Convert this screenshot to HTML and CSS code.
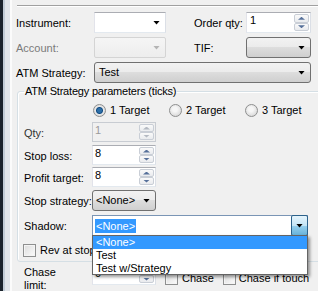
FILE: index.html
```html
<!DOCTYPE html>
<html lang="en">
<head>
    <meta charset="UTF-8">
    <title>Order entry</title>
    <link rel="stylesheet" href="styles.css">
</head>
<body>
<div class="window">
    <div class="edge"></div>
    <div class="content">
        <div class="sep"></div>

        <div class="top">
            <span class="lbl">Instrument:</span>
            <div class="combo edit"><span class="arrow"></span></div>
            <span></span>
            <span class="lbl">Order qty:</span>
            <div class="spin"><span class="val">1</span><div class="btns"><span class="b"><i class="up"></i></span><span class="b"><i class="dn"></i></span></div></div>

            <span class="lbl off">Account:</span>
            <div class="combo off"><span class="arrow"></span></div>
            <span></span>
            <span class="lbl">TIF:</span>
            <div class="combo list"><span class="arrow"></span></div>

            <span class="lbl">ATM Strategy:</span>
            <div class="combo list wide">Test<span class="arrow"></span></div>
        </div>

        <fieldset class="group">
            <legend>ATM Strategy parameters (ticks)</legend>

            <div class="radios">
                <label class="ropt"><span class="radio on"></span>1 Target</label>
                <label class="ropt"><span class="radio"></span>2 Target</label>
                <label class="ropt"><span class="radio"></span>3 Target</label>
            </div>

            <div class="prow r-qty">
                <span class="plbl">Qty:</span>
                <div class="spin small off"><span class="val">1</span><div class="btns"><span class="b"><i class="up"></i></span><span class="b"><i class="dn"></i></span></div></div>
            </div>
            <div class="prow r-stop">
                <span class="plbl">Stop loss:</span>
                <div class="spin small"><span class="val">8</span><div class="btns"><span class="b"><i class="up"></i></span><span class="b"><i class="dn"></i></span></div></div>
            </div>
            <div class="prow r-profit">
                <span class="plbl">Profit target:</span>
                <div class="spin small"><span class="val">8</span><div class="btns"><span class="b"><i class="up"></i></span><span class="b"><i class="dn"></i></span></div></div>
            </div>
            <div class="prow r-strat">
                <span class="plbl">Stop strategy:</span>
                <div class="combo list narrow">&lt;None&gt;<span class="arrow"></span></div>
            </div>
            <div class="prow r-shadow">
                <span class="plbl">Shadow:</span>
                <div class="combo shadow">
                    <span class="sel">&lt;None&gt;</span>
                    <span class="dropbtn"><span class="arrow"></span></span>
                    <ul class="droplist">
                        <li class="hi">&lt;None&gt;</li>
                        <li>Test</li>
                        <li>Test w/Strategy</li>
                    </ul>
                </div>
            </div>
            <div class="crow">
                <span class="check"></span>Rev at stop
            </div>
        </fieldset>

        <div class="chase">
            <span class="plbl two">Chase limit:</span>
            <div class="spin small"><span class="val">0</span><div class="btns"><span class="b"><i class="up"></i></span><span class="b"><i class="dn"></i></span></div></div>
            <span class="check c1"></span><span class="ct">Chase</span>
            <span class="check c2"></span><span class="ct">Chase if touch</span>
        </div>
    </div>
    <div class="rim"></div>
</div>
</body>
</html>
```

FILE: styles.css
```css
* {
    box-sizing: border-box;
}
body {
    margin: 0;
    width: 318px;
    height: 291px;
    overflow: hidden;
    background: #f0f0f0;
    font-family: "Liberation Sans", Arial, sans-serif;
    font-size: 11px;
    line-height: 13px;
    color: #000;
}
.window {
    display: flex;
    height: 291px;
}
.edge {
    width: 12px;
    flex: none;
    background: linear-gradient(to right, #1b232c 0 3px, #c2ccd6 3px 5px, #e2e6ea 5px 10px, #fbfbfb 10px 12px);
}
.rim {
    width: 2px;
    flex: none;
    background: linear-gradient(to right, #fdfdfd 0 1px, #e4e4e4 1px 2px);
}
.content {
    flex: 1;
    padding-left: 4px;
}
.sep {
    margin: 5px 2px 0 1px;
    height: 2px;
    border-top: 1px solid #a0a0a0;
    border-bottom: 1px solid #fff;
}

/* top rows */
.top {
    display: grid;
    grid-template-columns: 78px 72px 28px 52px 65px;
    grid-auto-rows: 21px;
    row-gap: 4px;
    margin-top: 5px;
    align-items: center;
}
.lbl {
    padding-top: 2px;
}
.lbl.off {
    color: #7a7a7a;
}
.wide {
    grid-column: 2 / 6;
}

/* combo boxes */
.combo {
    height: 21px;
    display: flex;
    align-items: center;
    padding-left: 4px;
    position: relative;
}
.arrow {
    width: 7px;
    height: 4px;
    margin-left: auto;
    margin-right: 5px;
    background: #000;
    clip-path: polygon(0 0, 100% 0, 50% 100%);
}
.combo.edit {
    background: #fff;
    border: 1px solid;
    border-color: #abadb3 #dbdfe6 #e3e9ef #e2e3ea;
}
.combo.off {
    background: linear-gradient(#f5f5f5, #ededed);
    border: 1px solid #d4d4d4;
    border-radius: 2px;
}
.combo.off .arrow {
    background: #b4b4b4;
}
.combo.list {
    border: 1px solid #707070;
    border-radius: 3px;
    background: linear-gradient(#f2f2f2, #ebebeb 50%, #dddddd 50%, #cfcfcf);
}
.combo.narrow {
    width: 64px;
    padding-left: 3px;
}
.combo.shadow {
    width: 216px;
    background: #fff;
    border: 1px solid #7a95b5;
    padding-left: 2px;
    z-index: 5;
}
.sel {
    background: #3399ff;
    color: #fff;
    padding: 1px 1px 0;
}
.dropbtn {
    margin: -1px -1px -1px auto;
    width: 17px;
    height: 21px;
    display: flex;
    align-items: center;
    border: 1px solid #2c628b;
    border-radius: 2px;
    background: linear-gradient(#e5f4fc, #c4e5f6 50%, #98d1ef 50%, #68b3db);
}
.dropbtn .arrow {
    margin: 0 auto;
}
.droplist {
    position: absolute;
    top: 100%;
    left: -1px;
    width: 216px;
    height: 40px;
    margin: 0;
    padding: 0;
    overflow: hidden;
    list-style: none;
    background: #fff;
    border: 1px solid #646464;
    box-shadow: 2px 2px 3px rgba(0, 0, 0, 0.4);
}
.droplist li {
    height: 13px;
    padding-left: 3px;
}
.droplist li.hi {
    background: #3399ff;
    color: #fff;
}

/* numeric spinners */
.spin {
    height: 21px;
    display: flex;
    background: #fff;
    border: 1px solid;
    border-color: #abadb3 #dbdfe6 #e3e9ef #e2e3ea;
}
.spin.small {
    width: 64px;
    height: 20px;
    flex: none;
}
.val {
    flex: 1;
    padding: 1px 0 0 3px;
}
.spin.small .val {
    padding-left: 2px;
}
.btns {
    width: 15px;
    margin: 1px 1px 1px 0;
    display: flex;
    flex-direction: column;
}
.b {
    flex: 1;
    display: flex;
    align-items: center;
    justify-content: center;
    border: 1px solid #c9ced6;
    border-radius: 2px;
    background: linear-gradient(#fafafa, #e9ebee);
}
.b i {
    width: 7px;
    height: 3px;
    background: #56709a;
}
.b .up {
    clip-path: polygon(50% 0, 100% 100%, 0 100%);
}
.b .dn {
    clip-path: polygon(0 0, 100% 0, 50% 100%);
}
.spin.off {
    background: #f0f0f0;
    border-color: #c8ccd2;
    color: #9a9a9a;
}
.spin.off .b i {
    background: #b4b9c2;
}

/* group box */
.group {
    margin: 2px 2px 0 1px;
    padding: 0 0 4px;
    min-width: 0;
    border: 1px solid #d5dfe5;
    border-radius: 3px;
    box-shadow: inset 1px 1px #fff;
}
.group legend {
    margin-left: 6px;
    padding: 0 1px;
    letter-spacing: -0.2px;
}
.radios {
    display: flex;
    margin: 6px 0 0 75px;
    height: 13px;
}
.ropt {
    display: flex;
    align-items: center;
    gap: 4px;
    width: 76px;
}
.radio {
    width: 13px;
    height: 13px;
    flex: none;
    border-radius: 50%;
    border: 1px solid #8e8f8f;
    background: radial-gradient(circle at 45% 40%, #f6f6f6 0 25%, #d2d2d2 90%);
}
.radio.on {
    background: radial-gradient(circle, #2d6fa8 0 2px, #0f4a82 3px, #e8e8e8 4px, #d2d2d2 90%);
}
.prow {
    display: flex;
    align-items: center;
    padding-left: 6px;
}
.plbl {
    width: 68px;
    flex: none;
    padding-top: 2px;
}
.r-qty {
    margin-top: 5px;
}
.r-qty .plbl {
    color: #333;
}
.r-stop {
    margin-top: 3px;
}
.r-profit {
    margin-top: 2px;
}
.r-strat {
    margin-top: 3px;
}
.r-shadow {
    margin-top: 4px;
}
.crow {
    display: flex;
    align-items: center;
    gap: 4px;
    margin-top: 8px;
    padding-left: 5px;
    height: 13px;
    white-space: nowrap;
}
.check {
    width: 13px;
    height: 13px;
    flex: none;
    border: 1px solid #8e8f8f;
    background: linear-gradient(135deg, #dcdcdc, #fbfbfb);
    box-shadow: inset 0 0 0 1px #f4f4f4;
}

/* chase row */
.chase {
    display: flex;
    align-items: flex-start;
    margin-top: 3px;
    padding-left: 8px;
    white-space: nowrap;
}
.plbl.two {
    white-space: normal;
    width: 40px;
    margin-right: 28px;
    padding-top: 1px;
}
.chase .check {
    margin-top: 7px;
    margin-right: 4px;
}
.chase .c1 {
    margin-left: 9px;
}
.chase .c2 {
    margin-left: 9px;
    margin-right: 3px;
}
.ct {
    margin-top: 7px;
}
```
